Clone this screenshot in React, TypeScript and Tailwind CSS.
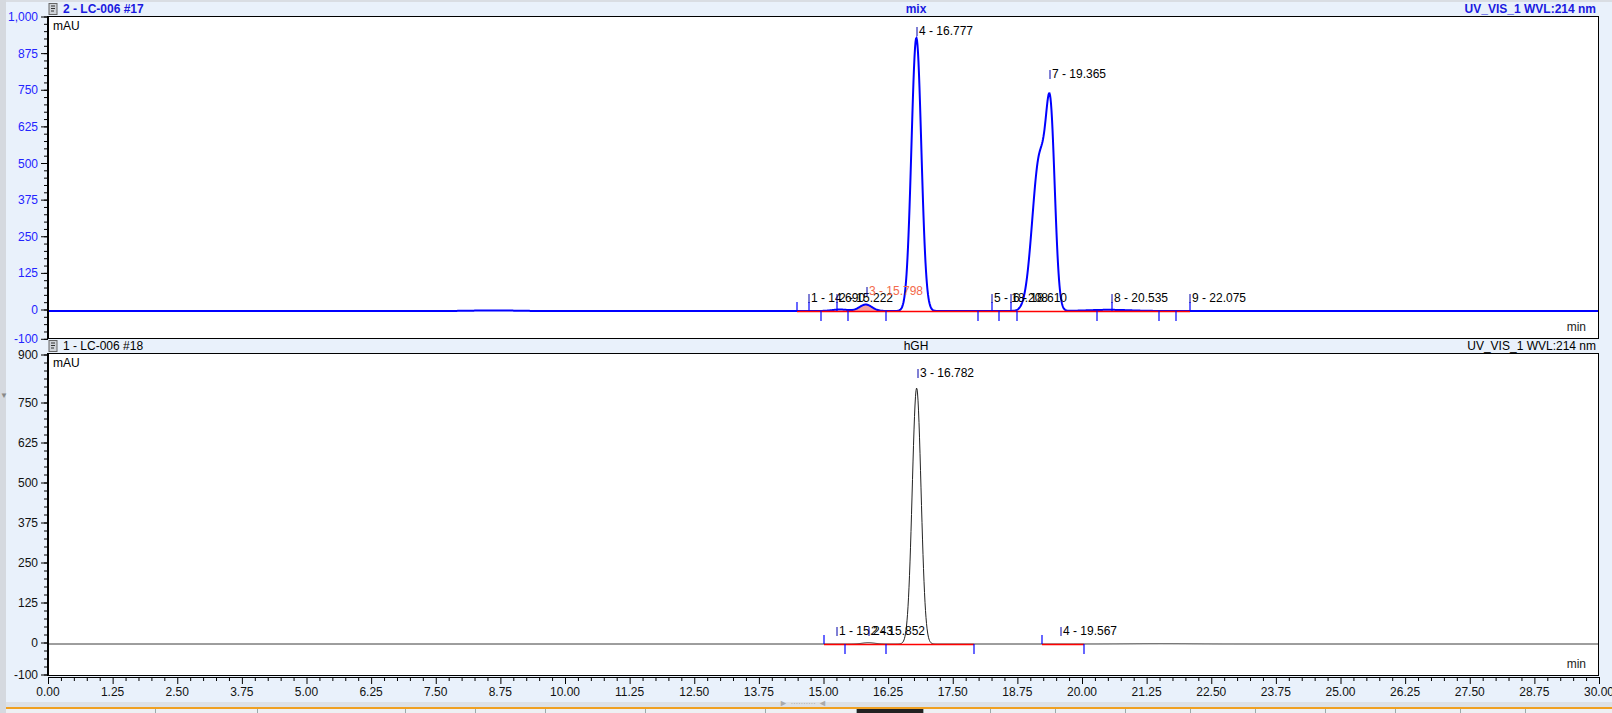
import React from 'react';

const PX_PER_MIN = 1551 / 30;
const BOX_W = 1551;
const BOX_H = 323;

type G = [number, number, number];
type Mark = { t: number; up: boolean };
type Label = { t: number; text: string; dy?: number; color?: string };

const gauss = (t: number, peaks: G[]) =>
    peaks.reduce((s, [c, h, w]) => s + h * Math.exp(-((t - c) ** 2) / (2 * w * w)), 0);

const tracePath = (peaks: G[], zeroY: number, scale: number) => {
    let d = '';
    for (let x = 0; x <= BOX_W; x += 0.5) {
        const y = zeroY - gauss(x / PX_PER_MIN, peaks) * scale;
        d += `${x === 0 ? 'M' : 'L'}${x.toFixed(1)},${y.toFixed(2)}`;
    }
    return d;
};

const YAxis: React.FC<{ zeroY: number; scale: number; max: number; labels: number[]; color: string }> = ({
    zeroY,
    scale,
    max,
    labels,
    color,
}) => {
    const minor: number[] = [];
    for (let v = -100; v <= max; v += 25) minor.push(v);
    return (
        <svg width={48} height={BOX_H} className="shrink-0 overflow-visible">
            <line x1={47.5} y1={0} x2={47.5} y2={BOX_H} stroke="#000" />
            {minor.map((v) => (
                <line key={v} x1={44} x2={48} y1={zeroY - v * scale} y2={zeroY - v * scale} stroke="#000" />
            ))}
            {labels.map((v) => (
                <g key={v}>
                    <line x1={41} x2={48} y1={zeroY - v * scale} y2={zeroY - v * scale} stroke="#000" />
                    <text
                        x={38}
                        y={zeroY - v * scale + 4}
                        textAnchor="end"
                        fontSize={12}
                        fill={color}
                        fontFamily="Liberation Sans, Arial, sans-serif"
                    >
                        {v === 1000 ? '1,000' : v}
                    </text>
                </g>
            ))}
        </svg>
    );
};

const Plot: React.FC<{
    peaks: G[];
    zeroY: number;
    scale: number;
    color: string;
    width: number;
    marks: Mark[];
    labels: Label[];
    red: [number, number][];
    shade?: G;
}> = ({ peaks, zeroY, scale, color, width, marks, labels, red, shade }) => {
    const X = (t: number) => t * PX_PER_MIN;
    let shadePath = '';
    if (shade) {
        const [c, , w] = shade;
        shadePath = `M${X(c - 3 * w)},${zeroY}`;
        for (let t = c - 3 * w; t <= c + 3 * w; t += 0.01) {
            shadePath += `L${X(t)},${zeroY - gauss(t, peaks) * scale}`;
        }
        shadePath += `L${X(c + 3 * w)},${zeroY}Z`;
    }
    return (
        <div className="relative border border-black bg-white" style={{ width: BOX_W, height: BOX_H }}>
            <span className="absolute left-[4px] top-[3px] text-[12px] leading-none text-black">mAU</span>
            <span className="absolute right-[12px] bottom-[5px] text-[12px] leading-none text-[#222]">min</span>
            <svg width={BOX_W - 2} height={BOX_H - 2} className="block">
                {shadePath && <path d={shadePath} fill="#f4a0a0" />}
                <path d={tracePath(peaks, zeroY, scale)} fill="none" stroke={color} strokeWidth={width} />
                {red.map(([a, b], i) => (
                    <line key={i} x1={X(a)} x2={X(b)} y1={zeroY + 0.5} y2={zeroY + 0.5} stroke="#f00" strokeWidth={1.5} />
                ))}
                {marks.map((m, i) => (
                    <line
                        key={i}
                        x1={X(m.t)}
                        x2={X(m.t)}
                        y1={m.up ? zeroY - 9 : zeroY}
                        y2={m.up ? zeroY : zeroY + 10}
                        stroke="#0000ff"
                        strokeWidth={1.2}
                    />
                ))}
                {labels.map((l, i) => (
                    <g key={i}>
                        <line x1={X(l.t)} x2={X(l.t)} y1={(l.dy ?? zeroY - 9) - 8} y2={(l.dy ?? zeroY - 9) + 1} stroke="#0000aa" />
                        <text
                            x={X(l.t) + 2}
                            y={l.dy ?? zeroY - 9}
                            fontSize={12}
                            fill={l.color ?? '#000'}
                            fontFamily="Liberation Sans, Arial, sans-serif"
                        >
                            {l.text}
                        </text>
                    </g>
                ))}
            </svg>
        </div>
    );
};

const XAxis: React.FC = () => {
    const ticks: number[] = [];
    for (let i = 0; i <= 120; i++) ticks.push(i * 0.25);
    return (
        <svg width={BOX_W + 20} height={26} className="block overflow-visible">
            <line x1={0} x2={BOX_W} y1={1.5} y2={1.5} stroke="#000" />
            {ticks.map((t, i) => (
                <line
                    key={i}
                    x1={t * PX_PER_MIN + 0.5}
                    x2={t * PX_PER_MIN + 0.5}
                    y1={1}
                    y2={i % 5 === 0 ? 8 : 5}
                    stroke="#000"
                />
            ))}
            {ticks
                .filter((_, i) => i % 5 === 0)
                .map((t) => (
                    <text
                        key={t}
                        x={t * PX_PER_MIN}
                        y={20}
                        textAnchor="middle"
                        fontSize={12}
                        fill="#111"
                        fontFamily="Liberation Sans, Arial, sans-serif"
                    >
                        {t.toFixed(2)}
                    </text>
                ))}
        </svg>
    );
};

const DocIcon: React.FC = () => (
    <svg width={10} height={12} viewBox="0 0 10 12" className="mr-[5px]">
        <rect x={1} y={0.5} width={8} height={11} fill="#cfd3d8" stroke="#666" />
        <line x1={3} x2={7} y1={3} y2={3} stroke="#333" />
        <line x1={3} x2={7} y1={5.5} y2={5.5} stroke="#333" />
        <line x1={3} x2={6} y1={8} y2={8} stroke="#333" />
    </svg>
);

const Header: React.FC<{ left: string; mid: string; right: string; blue: boolean }> = ({ left, mid, right, blue }) => (
    <div
        className={`ml-[48px] flex h-[14px] w-[1551px] items-center text-[12px] leading-none ${
            blue ? 'font-bold text-[#1a1ae0]' : 'text-black'
        }`}
    >
        <DocIcon />
        <span className="w-[300px]">{left}</span>
        <span className="flex-1 pl-[170px] text-center">{mid}</span>
        <span className="w-[300px] pr-[3px] text-right">{right}</span>
    </div>
);

const topPeaks: G[] = [
    [16.777, 932, 0.095],
    [19.375, 560, 0.085],
    [19.16, 520, 0.14],
    [15.798, 22, 0.12],
    [15.3, 5, 0.15],
    [8.6, 2, 0.4],
    [20.5, 4, 0.4],
];
const botPeaks: G[] = [
    [16.782, 800, 0.085],
    [15.85, 4, 0.12],
    [21.5, 0.8, 0.6],
];

const img = (x: number) => (x - 48) / PX_PER_MIN;

const topMarks: Mark[] = [
    ...[796, 808, 836, 991, 1010, 1111, 1189].map((x) => ({ t: img(x), up: true })),
    ...[820, 847, 885, 977, 998, 1016, 1096, 1158, 1175].map((x) => ({ t: img(x), up: false })),
];
const topLabels: Label[] = [
    { t: img(808), text: '1 - 14.690' },
    { t: img(836), text: '2 - 15.222' },
    { t: img(866), text: '3 - 15.798', color: '#f36a4c', dy: 278 },
    { t: img(916), text: '4 - 16.777', dy: 18 },
    { t: img(991), text: '5 - 18.208' },
    { t: img(1010), text: '6 - 18.610' },
    { t: img(1049), text: '7 - 19.365', dy: 61 },
    { t: img(1111), text: '8 - 20.535' },
    { t: img(1189), text: '9 - 22.075' },
];
const botMarks: Mark[] = [
    ...[823, 1041].map((x) => ({ t: img(x), up: true })),
    ...[844, 885, 973, 1083].map((x) => ({ t: img(x), up: false })),
];
const botLabels: Label[] = [
    { t: img(836), text: '1 - 15.243' },
    { t: img(868), text: '2 - 15.852' },
    { t: img(917), text: '3 - 16.782', dy: 23 },
    { t: img(1060), text: '4 - 19.567' },
];

export default function App() {
    return (
        <div
            className="flex h-[713px] w-[1612px] overflow-hidden bg-[#e9f1fb]"
            style={{ fontFamily: 'Liberation Sans, Arial, sans-serif' }}
        >
            <div className="relative w-[6px] shrink-0 bg-[#d5d9df]">
                <span className="absolute left-[0px] top-[392px] text-[8px] leading-none text-[#888]">▼</span>
            </div>
            <div className="flex flex-1 flex-col">
                <div className="h-[3px] bg-[#d9dde3]" />
                <div className="-ml-[6px]">
                    <Header left="2 - LC-006 #17" mid="mix" right="UV_VIS_1 WVL:214 nm" blue />
                    <div className="flex">
                        <YAxis zeroY={294} scale={0.293} max={1000} labels={[1000, 875, 750, 625, 500, 375, 250, 125, 0, -100]} color="#2424ff" />
                        <Plot
                            peaks={topPeaks}
                            zeroY={294}
                            scale={0.293}
                            color="#0000ff"
                            width={2}
                            marks={topMarks}
                            labels={topLabels}
                            red={[[img(796), img(1189)]]}
                            shade={[15.798, 22, 0.12]}
                        />
                    </div>
                    <Header left="1 - LC-006 #18" mid="hGH" right="UV_VIS_1 WVL:214 nm" blue={false} />
                    <div className="flex">
                        <YAxis zeroY={290} scale={0.32} max={900} labels={[900, 750, 625, 500, 375, 250, 125, 0, -100]} color="#111" />
                        <Plot
                            peaks={botPeaks}
                            zeroY={290}
                            scale={0.32}
                            color="#222"
                            width={1}
                            marks={botMarks}
                            labels={botLabels}
                            red={[
                                [img(823), img(973)],
                                [img(1041), img(1083)],
                            ]}
                        />
                    </div>
                    <div className="ml-[48px]">
                        <XAxis />
                    </div>
                </div>
                <div className="relative h-[8px] bg-[#dde1e6]">
                    <span className="absolute left-[773px] top-[-3px] text-[9px] leading-none text-[#aaa]">► ∙∙∙∙∙∙∙∙∙∙ ◄</span>
                </div>
                <div className="flex h-[8px] border-t-2 border-[#f0a020] bg-[#eef0f3]">
                    {[0, 150, 252, 400, 470, 540, 640, 760, 851, 918, 985, 1050, 1120, 1185, 1250, 1320, 1390, 1455, 1520].map(
                        (x, i, a) => (
                            <div
                                key={x}
                                className={`border-r border-[#9aa] ${i === 8 ? 'bg-[#222]' : ''}`}
                                style={{ width: (a[i + 1] ?? 1612) - x }}
                            />
                        ),
                    )}
                </div>
            </div>
        </div>
    );
}
